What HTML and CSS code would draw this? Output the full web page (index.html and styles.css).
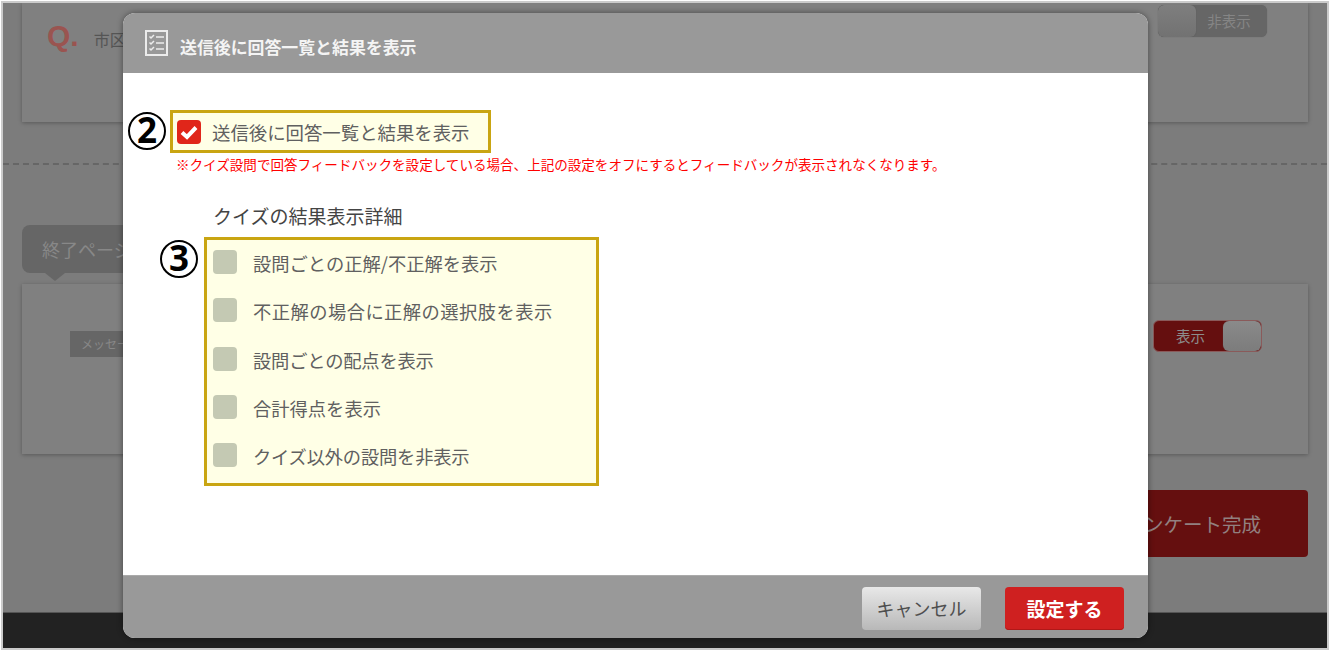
FILE: index.html
```html
<!DOCTYPE html>
<html lang="ja">
<head>
<meta charset="utf-8">
<title>送信後に回答一覧と結果を表示</title>
<link rel="stylesheet" href="styles.css">
</head>
<body>
<div class="frame">
  <section class="card card-top">
    <div class="question"><span class="q-mark">Q.</span><span class="q-text">市区町村</span></div>
    <div class="toggle toggle-off"><span class="knob"></span><span class="toggle-label">非表示</span></div>
  </section>
  <hr class="divider">
  <div class="bubble">終了ページ</div>
  <section class="card card-end">
    <div class="msg-label">メッセージ</div>
    <div class="toggle toggle-on"><span class="toggle-label">表示</span><span class="knob"></span></div>
  </section>
  <div class="finish-row"><button class="finish">アンケート完成</button></div>
  <footer class="page-footer"></footer>
</div>

<div class="modal">
  <header class="modal-head">
    <svg class="head-icon" viewBox="0 0 23 26" width="23" height="26" fill="none" stroke="#ececec">
      <rect x="1" y="1" width="21" height="24" stroke-width="2"/>
      <path d="M4.5 6.5l1.5 1.5 3-3M4.5 12.5l1.5 1.5 3-3M4.5 18.5l1.5 1.5 3-3" stroke-width="1.5"/>
      <path d="M11 7h8M11 13h8M11 19h8" stroke-width="1.7"/>
    </svg>
    <h1 class="modal-title">送信後に回答一覧と結果を表示</h1>
  </header>
  <div class="modal-body">
    <div class="row-main">
      <span class="badge">2</span>
      <label class="note-box box-main">
        <span class="check check-on">
          <svg viewBox="0 0 24 24" width="24" height="24" fill="none" stroke="#fff" stroke-width="4"><path d="M5 12.5l5 4.5 9-9.5"/></svg>
        </span>
        <span class="main-text">送信後に回答一覧と結果を表示</span>
      </label>
    </div>
    <p class="warning">※クイズ設問で回答フィードバックを設定している場合、上記の設定をオフにするとフィードバックが表示されなくなります。</p>
    <h2 class="detail-head">クイズの結果表示詳細</h2>
    <div class="row-detail">
      <span class="badge">3</span>
      <div class="note-box box-detail">
        <label class="opt"><span class="check"></span><span>設問ごとの正解/不正解を表示</span></label>
        <label class="opt opt-wide"><span class="check"></span><span>不正解の場合に正解の選択肢を表示</span></label>
        <label class="opt opt-tight"><span class="check"></span><span>設問ごとの配点を表示</span></label>
        <label class="opt"><span class="check"></span><span>合計得点を表示</span></label>
        <label class="opt opt-tight"><span class="check"></span><span>クイズ以外の設問を非表示</span></label>
      </div>
    </div>
  </div>
  <footer class="modal-foot">
    <button class="btn btn-cancel">キャンセル</button>
    <button class="btn btn-ok">設定する</button>
  </footer>
</div>
</body>
</html>
```

FILE: styles.css
```css
* { box-sizing: border-box; }
html, body { margin: 0; padding: 0; }
body {
  width: 1331px;
  height: 653px;
  overflow: hidden;
  background: #fff;
  position: relative;
  font-family: "Noto Sans CJK JP", "Liberation Sans", sans-serif;
}
.frame {
  margin: 1px 2px 3px 1px;
  height: 649px;
  border: 2px solid #cbcbcb;
  background: #7c7c7c;
  display: flex;
  flex-direction: column;
  overflow: hidden;
}
.card {
  margin: 0 19px;
  background: #808080;
  box-shadow: 0 1px 4px rgba(0, 0, 0, .28);
  display: flex;
  justify-content: space-between;
  align-items: flex-start;
  flex: none;
}
.card-top { height: 119px; padding: 2px 41px 0 25px; }
.question { display: flex; align-items: baseline; padding-top: 13px; }
.q-mark { color: #9a5450; font: bold 30px/36px "Liberation Sans", sans-serif; }
.q-text { margin-left: 15px; color: #555; font-size: 16px; }
.toggle {
  width: 109px;
  height: 32px;
  border-radius: 6px;
  display: flex;
  overflow: hidden;
  font-size: 14.5px;
  line-height: 32px;
}
.toggle-off { background: #666; box-shadow: 0 0 1px #5c5c5c; }
.toggle-off .toggle-label { padding-right: 5px; color: #858585; }
.toggle-on { background: #650f0f; border: 1px solid #8a5a5a; line-height: 30px; margin-top: 36px; }
.toggle-on .toggle-label { padding-left: 4px; }
.knob { width: 38px; flex: none; background: linear-gradient(#7e7e7e, #727272); border-radius: 6px; box-shadow: 0 0 1px #555; }
.toggle-on .knob { background: linear-gradient(#8a8a8a, #7c7c7c); }
.toggle-label { flex: 1; text-align: center; color: #8c8c8c; }
.divider {
  margin: 41px 0 0;
  border: 0;
  border-top: 2px dashed #666;
  height: 2px;
  flex: none;
}
.bubble {
  position: relative;
  margin: 60px 0 0 19px;
  width: 140px;
  height: 48px;
  border-radius: 8px;
  background: #666;
  color: #888;
  font-size: 18px;
  line-height: 48px;
  padding-left: 20px;
  flex: none;
}
.bubble::after {
  content: "";
  position: absolute;
  left: 23px;
  bottom: -8px;
  border: 10px solid transparent;
  border-top-color: #666;
  border-bottom-width: 0;
  border-top-width: 8px;
}
.card-end { margin-top: 11px; height: 170px; padding: 0 46px 0 48px; }
.msg-label {
  margin-top: 47px;
  width: 100px;
  height: 26px;
  background: #666;
  color: #888;
  font-size: 12px;
  line-height: 26px;
  padding-left: 11px;
}
.finish-row { margin: 36px 19px 0 0; display: flex; justify-content: flex-end; flex: none; }
.finish {
  width: 188px;
  height: 67px;
  border: 0;
  border-radius: 4px;
  background: #650f0f;
  color: #928080;
  font: 19.5px/67px "Noto Sans CJK JP", sans-serif;
  padding: 0 47px 0 0;
  text-align: right;
  white-space: nowrap;
}
.page-footer { margin-top: auto; height: 36px; flex: none; background: #222; border-top: 1px solid #555; }

.modal {
  position: absolute;
  left: 123px;
  top: 13px;
  width: 1025px;
  height: 625px;
  border-radius: 12px;
  overflow: hidden;
  display: flex;
  flex-direction: column;
  background: #fff;
  box-shadow: 0 0 6px rgba(0, 0, 0, .45);
}
.modal-head {
  height: 60px;
  flex: none;
  background: #999;
  display: flex;
  align-items: flex-start;
  padding: 17px 0 0 22px;
}
.head-icon { flex: none; }
.modal-title {
  margin: 6px 0 0 12px;
  color: #f4f4f4;
  font-size: 16.9px;
  font-weight: 700;
  line-height: 22px;
}
.modal-body { flex: 1; padding-top: 37px; display: flex; flex-direction: column; }
.row-main { display: flex; align-items: flex-start; gap: 4px; padding-left: 5px; }
.row-detail { display: flex; align-items: flex-start; gap: 6px; padding-left: 37px; margin-top: 9px; }
.badge {
  width: 38px;
  height: 38px;
  margin-top: 2px;
  flex: none;
  border: 2px solid #000;
  border-radius: 50%;
  background: #fff;
  color: #000;
  text-align: center;
  font: 700 35px/32px "Noto Sans", sans-serif;
}
.row-detail .badge { margin-top: 3px; }
.note-box { display: flex; border: 3px solid #c9a512; background: #ffffe6; color: #606060; }
.box-main { width: 321px; height: 43px; align-items: center; padding-left: 4px; gap: 11px; }
.main-text { font-size: 18.4px; line-height: 24px; }
.check { width: 24px; height: 24px; flex: none; border-radius: 4px; background: #c4c9b3; display: block; }
.check-on { background: #e0261a; }
.check-on svg { display: block; }
.warning {
  margin: -1px 0 0 53px;
  color: #f00;
  font-size: 13.55px;
  line-height: 24px;
  white-space: nowrap;
}
.detail-head {
  margin: 28px 0 0 90px;
  color: #444;
  font-size: 19px;
  font-weight: 400;
  line-height: 24px;
}
.box-detail {
  width: 395px;
  height: 249px;
  padding: 10px 0 0 6px;
  flex-direction: column;
  gap: 24.25px;
}
.opt { display: flex; align-items: center; gap: 16px; height: 24px; font-size: 18.3px; white-space: nowrap; }
.opt span:last-child { position: relative; top: 1px; }
.opt-wide { letter-spacing: .45px; }
.opt-tight { letter-spacing: -.2px; }
.modal-foot {
  height: 63px;
  flex: none;
  background: #999;
  border-top: 1px solid #aaa;
  display: flex;
  justify-content: flex-end;
  gap: 24px;
  padding: 11px 24px 0 0;
}
.btn {
  width: 119px;
  height: 43px;
  border: 0;
  border-radius: 4px;
  font: 18px/43px "Noto Sans CJK JP", sans-serif;
  padding: 0;
}
.btn-cancel { background: linear-gradient(#e8e8e8, #b8b8b8); color: #4f4f4f; }
.btn-ok { background: #cf2020; color: #fff; font-weight: 700; font-size: 19px; box-shadow: inset 0 -1px 0 #b01818; }
```
